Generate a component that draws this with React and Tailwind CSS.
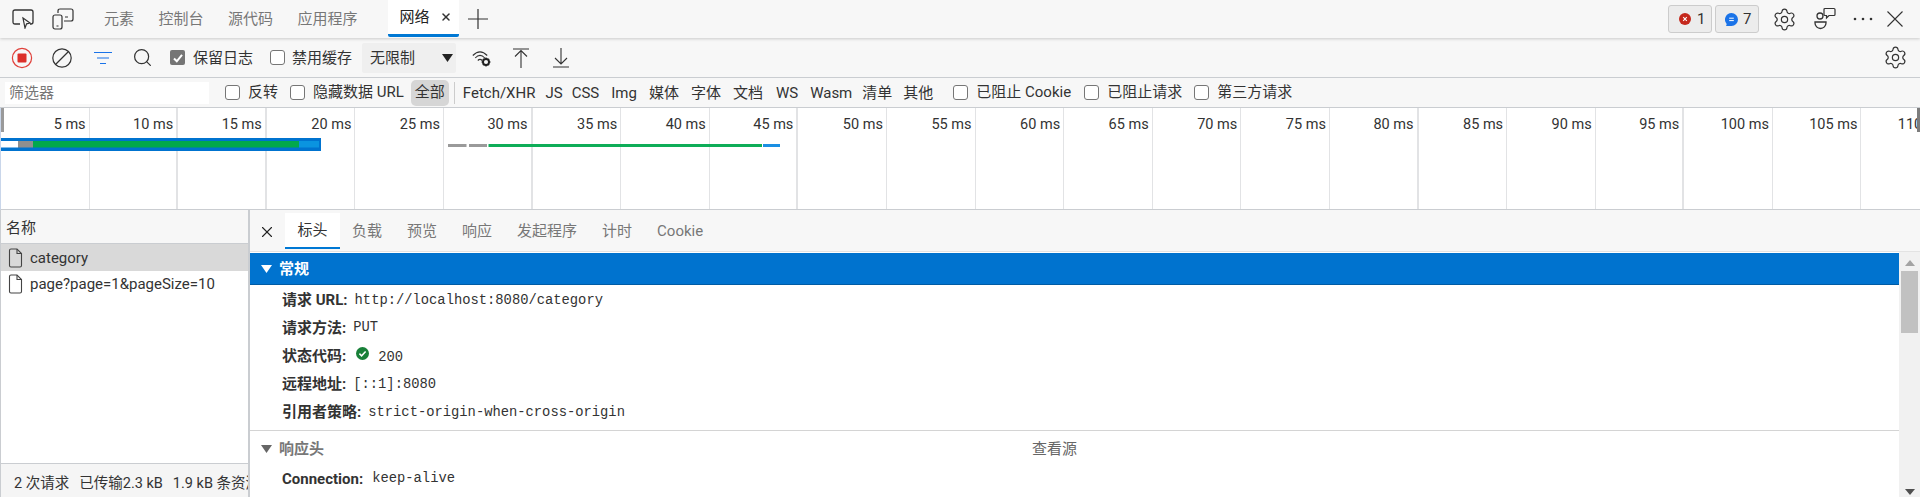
import React from "react";
import { Settings, Search, X } from "lucide-react";

const ticks = Array.from({ length: 22 }, (_, i) => (i + 1) * 5);
const thick = new Set([10, 15, 30, 45, 80, 95]);

function Box({ checked }) {
  return checked ? (
    <span className="block w-[15px] h-[15px] shrink-0 rounded-[2px] bg-[#757575] flex items-center justify-center">
      <svg width="12" height="12" viewBox="0 0 12 12" fill="none">
        <path d="M2 6.5 L4.8 9.3 L10 2.8" stroke="#fff" strokeWidth="2" />
      </svg>
    </span>
  ) : (
    <span className="block w-[15px] h-[15px] shrink-0 rounded-[3px] border border-[#767676] bg-white" />
  );
}

function Check({ label, className = "" }) {
  return (
    <span className={`flex items-center gap-[8px] ${className}`}>
      <Box />
      <span className="whitespace-nowrap">{label}</span>
    </span>
  );
}

function FileIcon() {
  return (
    <svg width="15" height="20" viewBox="0 0 15 20" fill="none" className="shrink-0">
      <path d="M1.5 2.5 Q1.5 1 3 1 H9 L13.5 5.5 V17.5 Q13.5 19 12 19 H3 Q1.5 19 1.5 17.5 Z" stroke="#444" strokeWidth="1.1" />
      <path d="M9 1 V5.5 H13.5" stroke="#444" strokeWidth="1.1" />
    </svg>
  );
}

function Row({ label, value, h = "h-[27.5px]", gap = "ml-[7px]" }) {
  return (
    <div className={`${h} flex items-center pl-[32px] whitespace-nowrap`}>
      <span className="font-bold">{label}:</span>
      <span className={`${gap} font-['Liberation_Mono',monospace] text-[13.8px]`}>{value}</span>
    </div>
  );
}

const types = [
  ["Fetch/XHR", "ml-[8px]"],
  ["JS", "ml-[10px]"],
  ["CSS", "ml-[9px]"],
  ["Img", "ml-[12px]"],
  ["媒体", "ml-[12px]"],
  ["字体", "ml-[12px]"],
  ["文档", "ml-[12px]"],
  ["WS", "ml-[13px]"],
  ["Wasm", "ml-[12px]"],
  ["清单", "ml-[10px]"],
  ["其他", "ml-[11px]"],
];

export default function App() {
  return (
    <div className="w-[1920px] h-[497px] overflow-hidden flex flex-col bg-white text-[#333] text-[15px] leading-none font-['Roboto','Noto_Sans_CJK_SC',sans-serif]">
      {/* main tab bar */}
      <div className="relative h-[38px] shrink-0 flex items-center bg-[#f7f7f7] shadow-[0_1px_3px_rgba(0,0,0,0.18)] z-10">
        <svg width="22" height="20" viewBox="0 0 22 20" fill="none" className="ml-[12px] shrink-0">
          <path d="M8 15 H3 Q1 15 1 13 V3 Q1 1 3 1 H19 Q21 1 21 3 V13 Q21 15 19 15 H18" stroke="#333" strokeWidth="1.3" />
          <path d="M11 9 L18 14 L14.6 14.8 L13 19 Z" stroke="#333" strokeWidth="1.2" fill="#f7f7f7" />
        </svg>
        <svg width="22" height="22" viewBox="0 0 22 22" fill="none" className="ml-[18px] shrink-0">
          <path d="M6 5 V3 Q6 1 8 1 H19 Q21 1 21 3 V11 Q21 13 19 13 H12" stroke="#333" strokeWidth="1.2" />
          <rect x="1" y="7" width="9" height="14" rx="2" stroke="#333" strokeWidth="1.2" />
          <path d="M4.5 18 H6.5 M13 9 H16" stroke="#333" strokeWidth="1.2" />
        </svg>
        <div className="ml-[30px] flex text-[#777] gap-[24.5px] whitespace-nowrap">
          <span>元素</span>
          <span>控制台</span>
          <span>源代码</span>
          <span>应用程序</span>
        </div>
        <div className="ml-[30px] w-[71px] h-[37px] self-start bg-white relative flex items-center pl-[12px] border-b-[3px] border-[#0078d4] rounded-b-[2px] text-[#222]">
          <span>网络</span>
          <X size={12} strokeWidth={3} className="ml-[10px] text-[#333]" />
        </div>
        <svg width="20" height="20" viewBox="0 0 20 20" fill="none" className="ml-[9px] shrink-0">
          <path d="M10 0 V20 M0 10 H20" stroke="#333" strokeWidth="1.2" />
        </svg>
        <div className="ml-auto flex items-center">
          <div className="w-[44px] h-[28px] rounded-[3px] border border-[#ccc] bg-[#ececec] flex items-center pl-[10px] gap-[6px] mr-[3px]">
            <svg width="12" height="12" viewBox="0 0 12 12">
              <circle cx="6" cy="6" r="6" fill="#c5281c" />
              <path d="M4.2 4.2 L7.8 7.8 M7.8 4.2 L4.2 7.8" stroke="#fff" strokeWidth="1.1" />
            </svg>
            <span>1</span>
          </div>
          <div className="w-[44px] h-[28px] rounded-[3px] border border-[#ccc] bg-[#ececec] flex items-center pl-[9px] gap-[5px] mr-[1px]">
            <svg width="13" height="13" viewBox="0 0 13 13">
              <path d="M6.5 0 A6.5 6.5 0 1 1 6.5 13 H1 Q2 11.5 1.4 10.5 A6.5 6.5 0 0 1 6.5 0 Z" fill="#1a73e8" />
              <path d="M4.2 5.2 H8.8 M4.2 7.6 H8.8" stroke="#fff" strokeWidth="1" />
            </svg>
            <span>7</span>
          </div>
          <Settings size={25} strokeWidth={1.15} className="ml-[12px] text-[#333]" />
          <svg width="22" height="24" viewBox="0 0 22 24" fill="none" className="ml-[17px]">
            <circle cx="6" cy="9" r="3" stroke="#333" strokeWidth="1.3" />
            <path d="M1 15 H12 V16 A5.5 5.5 0 0 1 1 16 Z" stroke="#333" strokeWidth="1.3" />
            <path d="M11 1.5 H20 Q21 1.5 21 2.5 V7.5 Q21 8.5 20 8.5 H15 L12.5 11 V8.5 H11 Q10 8.5 10 7.5 V2.5 Q10 1.5 11 1.5 Z" stroke="#333" strokeWidth="1.2" />
          </svg>
          <svg width="20" height="4" viewBox="0 0 20 4" className="ml-[17px]">
            <circle cx="2" cy="2" r="1.3" fill="#333" />
            <circle cx="10" cy="2" r="1.3" fill="#333" />
            <circle cx="18" cy="2" r="1.3" fill="#333" />
          </svg>
          <svg width="16" height="16" viewBox="0 0 16 16" fill="none" className="ml-[14px] mr-[17px]">
            <path d="M0.5 0.5 L15.5 15.5 M15.5 0.5 L0.5 15.5" stroke="#333" strokeWidth="1.1" />
          </svg>
        </div>
      </div>

      {/* network toolbar */}
      <div className="h-[40px] shrink-0 flex items-center bg-[#f7f7f7] border-b border-[#cacdd1] text-[#333]">
        <svg width="22" height="22" viewBox="0 0 22 22" fill="none" className="ml-[11px] shrink-0">
          <circle cx="11" cy="11" r="9.6" stroke="#e0403a" strokeWidth="1.2" />
          <rect x="6.5" y="6.5" width="9" height="9" rx="1" fill="#dc2f2a" />
        </svg>
        <svg width="20" height="20" viewBox="0 0 20 20" fill="none" className="ml-[19px] shrink-0">
          <circle cx="10" cy="10" r="9.2" stroke="#333" strokeWidth="1.2" />
          <path d="M3.5 16.5 L16.5 3.5" stroke="#333" strokeWidth="1.2" />
        </svg>
        <svg width="18" height="14" viewBox="0 0 18 14" fill="none" className="ml-[22px] shrink-0">
          <path d="M0 1.5 H18 M3 7 H15 M6 12.5 H12" stroke="#1a73e8" strokeWidth="1.2" />
        </svg>
        <Search size={21} strokeWidth={1.4} className="ml-[20px] text-[#333] shrink-0" />
        <span className="ml-[17px]"><Box checked /></span>
        <span className="ml-[8px] pt-[2px] whitespace-nowrap">保留日志</span>
        <span className="ml-[17px]"><Box /></span>
        <span className="ml-[7px] pt-[2px] whitespace-nowrap">禁用缓存</span>
        <div className="ml-[10px] w-[94px] h-[30px] rounded-[2px] bg-[#efefef] flex items-center pl-[8px] relative">
          <span className="pt-[2px]">无限制</span>
          <svg width="11" height="8" viewBox="0 0 11 8" className="ml-auto mr-[3px]">
            <path d="M0 0 H11 L5.5 8 Z" fill="#222" />
          </svg>
        </div>
        <svg width="20" height="18" viewBox="0 0 20 18" fill="none" className="ml-[16px] shrink-0">
          <path d="M0.8 6.5 Q8 -0.8 15.2 6.5 M3.2 9 Q8 3.8 12.8 9 M5.8 11.5 Q8 9.2 10.2 11.5" stroke="#333" strokeWidth="1.1" />
          <circle cx="14" cy="13" r="3" stroke="#222" strokeWidth="1.9" />
          <path d="M14 8.6 V10 M14 16 V17.4 M9.6 13 H11 M17 13 H18.4 M10.9 9.9 L11.9 10.9 M16.1 15.1 L17.1 16.1 M17.1 9.9 L16.1 10.9 M11.9 15.1 L10.9 16.1" stroke="#222" strokeWidth="1.3" />
        </svg>
        <svg width="16" height="20" viewBox="0 0 16 20" fill="none" className="ml-[21px] shrink-0">
          <path d="M0 1 H16 M8 20 V2.5 M2 8.5 L8 2.5 L14 8.5" stroke="#333" strokeWidth="1.1" />
        </svg>
        <svg width="16" height="20" viewBox="0 0 16 20" fill="none" className="ml-[24px] shrink-0">
          <path d="M0 19 H16 M8 0 V16 M2 10 L8 16 L14 10" stroke="#333" strokeWidth="1.1" />
        </svg>
        <Settings size={25} strokeWidth={1.15} className="ml-auto mr-[12px] text-[#333]" />
      </div>

      {/* filter bar */}
      <div className="h-[30px] shrink-0 flex items-center bg-[#f7f7f7] border-b border-[#cacdd1] text-[#333] whitespace-nowrap">
        <div className="ml-[5px] w-[204px] h-[22px] bg-white flex items-center pl-[4px] pt-[2px] text-[#777]">筛选器</div>
        <Check label="反转" className="ml-[16px]" />
        <Check label="隐藏数据 URL" className="ml-[12px]" />
        <span className="ml-[7px] w-[38px] h-[26px] rounded-[5px] bg-[#d6d6d6] flex items-center justify-center">全部</span>
        <span className="ml-[5px] w-px h-[22px] bg-[#ccc]" />
        {types.map(([t, m]) => (
          <span key={t} className={`${m} pt-[1px]`}>{t}</span>
        ))}
        <Check label="已阻止 Cookie" className="ml-[20px]" />
        <Check label="已阻止请求" className="ml-[13px]" />
        <Check label="第三方请求" className="ml-[12px]" />
      </div>

      {/* overview */}
      <div className="relative h-[102px] shrink-0 flex overflow-hidden bg-white border-b border-[#cacdd1] border-l border-l-[#c9d6ea]">
        {ticks.map((t) => (
          <div
            key={t}
            className={`w-[88.6px] shrink-0 h-full text-right pr-[3px] pt-[10px] whitespace-nowrap text-[14.5px] text-[#333] ${
              thick.has(t) ? "border-r-2 border-[#e2e3e5]" : "border-r border-[#e2e3e5]"
            }`}
          >
            {t} ms
          </div>
        ))}
        <span className="absolute left-0 top-0 w-[3px] h-[24px] bg-[#9a9a9a]" />
        <span className="absolute right-0 top-0 w-[3px] h-[24px] bg-[#7d7d7d]" />
        <svg width="800" height="50" viewBox="0 0 800 50" className="absolute left-[-1px] top-[30px]">
          <rect x="0" y="0" width="321" height="13" fill="#0073cf" />
          <rect x="0" y="3" width="18" height="6.5" fill="#fff" />
          <rect x="18" y="3" width="15" height="6.5" fill="#8f8f8f" />
          <rect x="33" y="3" width="266" height="6.5" fill="#02a84c" />
          <rect x="299" y="3" width="20" height="6.5" fill="#0a94e0" />
          <rect x="448" y="6" width="18.5" height="3" fill="#9a9a9a" />
          <rect x="469" y="6" width="18" height="3" fill="#9a9a9a" />
          <rect x="488.5" y="6" width="273.5" height="3" fill="#0ead58" />
          <rect x="763" y="6" width="17" height="3" fill="#1a8fe3" />
        </svg>
      </div>

      {/* bottom split */}
      <div className="flex-1 min-h-0 flex">
        <div className="w-[250px] shrink-0 flex flex-col border-r-2 border-[#cacdd1] border-l border-l-[#cacdd1]">
          <div className="h-[34px] shrink-0 flex items-center pl-[5px] pt-[3px] bg-[#f7f7f7] border-b border-[#cacdd1]">名称</div>
          <div className="h-[27px] shrink-0 flex items-center pl-[7px] gap-[7px] bg-[#d9d9d9]">
            <FileIcon />
            <span className="mt-[2px]">category</span>
          </div>
          <div className="h-[25px] shrink-0 flex items-center pl-[7px] gap-[7px]">
            <FileIcon />
            <span className="mt-[2px]">page?page=1&amp;pageSize=10</span>
          </div>
          <div className="flex-1" />
          <div className="h-[34px] shrink-0 flex items-center pl-[13px] pt-[8px] bg-[#f5f5f5] border-t border-[#cacdd1] whitespace-nowrap overflow-hidden text-[14.5px]">
            <span>2 次请求</span>
            <span className="ml-[10px]">已传输2.3 kB</span>
            <span className="ml-[10px]">1.9 kB 条资源</span>
          </div>
        </div>

        <div className="flex-1 min-w-0 flex flex-col">
          <div className="h-[42px] shrink-0 flex bg-[#f7f7f7] border-b border-[#e3e3e3] text-[#777] whitespace-nowrap">
            <X size={18} strokeWidth={1.5} className="ml-[8px] mt-[13px] text-[#222] shrink-0" />
            <div className="ml-[9px] mt-[3px] w-[55px] h-[36px] bg-white border-b-2 border-[#0078d4] flex items-center justify-center text-[#333]">标头</div>
            <div className="ml-[12px] mt-[3px] h-[36px] flex items-center gap-[25px]">
              <span>负载</span>
              <span>预览</span>
              <span>响应</span>
              <span>发起程序</span>
              <span>计时</span>
              <span>Cookie</span>
            </div>
          </div>
          <div className="flex-1 min-h-0 flex">
            <div className="flex-1 min-w-0 pt-[1px] whitespace-nowrap overflow-hidden">
              <div className="h-[32px] flex items-center pl-[11px] bg-[#0073cf] border-b border-[#005ba4] text-white font-bold">
                <svg width="11" height="8" viewBox="0 0 11 8">
                  <path d="M0 0 H11 L5.5 8 Z" fill="#fff" />
                </svg>
                <span className="ml-[7px] pt-[2px]">常规</span>
              </div>
              <div className="pt-[2px] h-[146px] border-b border-[#d4d4d4]">
                <Row label="请求 URL" value="http://localhost:8080/category" />
                <Row label="请求方法" value="PUT" />
                <div className="h-[28px] flex items-center pl-[32px]">
                  <span className="font-bold">状态代码:</span>
                  <svg width="13" height="13" viewBox="0 0 13 13" className="ml-[10px] mb-[5px]">
                    <circle cx="6.5" cy="6.5" r="6.5" fill="#188038" />
                    <path d="M3.4 6.6 L5.6 8.8 L9.6 4.4" stroke="#fff" strokeWidth="1.5" fill="none" />
                  </svg>
                  <span className="ml-[9px] mt-[3px] font-['Liberation_Mono',monospace] text-[13.8px]">200</span>
                </div>
                <Row label="远程地址" value="[::1]:8080" h="h-[29px]" />
                <Row label="引用者策略" value="strict-origin-when-cross-origin" />
              </div>
              <div className="h-[36px] flex items-center pl-[11px] font-bold text-[#777] relative">
                <svg width="11" height="8" viewBox="0 0 11 8">
                  <path d="M0 0 H11 L5.5 8 Z" fill="#666" />
                </svg>
                <span className="ml-[7px]">响应头</span>
                <span className="absolute left-[782px] font-normal text-[#666]">查看源</span>
              </div>
              <Row label="Connection" value="keep-alive" h="h-[24px]" gap="ml-[9px]" />
            </div>
            <div className="w-[21px] shrink-0 bg-[#f1f1f1] flex flex-col items-center">
              <svg width="10" height="6" viewBox="0 0 10 6" className="mt-[8px]">
                <path d="M0 6 H10 L5 0 Z" fill="#a3a3a3" />
              </svg>
              <span className="mt-[5px] w-[17px] h-[62px] bg-[#c1c1c1]" />
              <svg width="10" height="6" viewBox="0 0 10 6" className="mt-auto mb-[2px]">
                <path d="M0 0 H10 L5 6 Z" fill="#505050" />
              </svg>
            </div>
          </div>
        </div>
      </div>
    </div>
  );
}
